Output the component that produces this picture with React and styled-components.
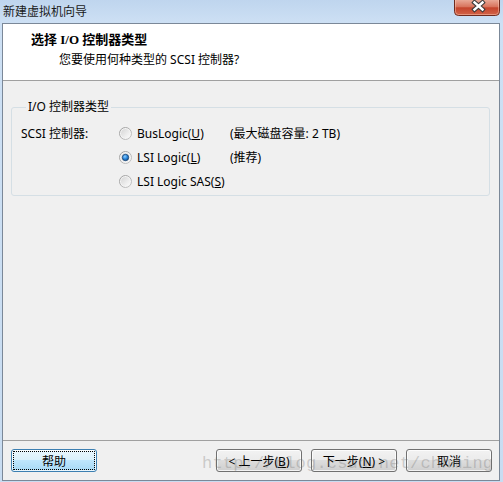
import React from "react";
import styled, { createGlobalStyle } from "styled-components";

const GlobalStyle = createGlobalStyle`
  html, body {
    margin: 0;
    padding: 0;
  }
  body {
    width: 503px;
    height: 482px;
    overflow: hidden;
    background: #c9ddf2;
    font-family: "Noto Sans", "Noto Sans CJK SC", sans-serif;
    font-size: 12px;
    color: #000;
  }
`;

const Window = styled.div`
  position: relative;
  width: 503px;
  height: 482px;
  display: flex;
  flex-direction: column;
  background: linear-gradient(to bottom, #bfd5ee 0px, #cde0f4 23px, #c8dcf1 100%);
  overflow: hidden;
`;

const TitleBar = styled.div`
  height: 23px;
  flex-shrink: 0;
  display: flex;
  align-items: flex-start;
  justify-content: space-between;
  padding: 0 3px;
`;

const Caption = styled.span`
  line-height: 23px;
  font-size: 12px;
  color: #1a1a1a;
`;

const Client = styled.div`
  flex: 1;
  margin: 0 3px 1px 2px;
  border: 1px solid #7b8898;
  background: #f0f0f0;
  display: flex;
  flex-direction: column;
`;

const Header = styled.div`
  height: 57px;
  box-sizing: border-box;
  flex-shrink: 0;
  background: #fff;
  border-bottom: 1px solid #a0a0a0;
  padding: 8px 0 0 28px;
`;

const HeaderTitle = styled.div`
  font-family: "Liberation Serif", "Noto Sans CJK SC", serif;
  font-weight: bold;
  font-size: 13px;
  line-height: 16px;
`;

const HeaderSub = styled.div`
  margin: 4px 0 0 28px;
  line-height: 16px;
`;

const Body = styled.div`
  flex: 1;
  padding: 18px 9px 0 8px;
`;

const Group = styled.fieldset`
  margin: 0;
  padding: 6px 0 2px 9px;
  border: 1px solid #d5dfe5;
  border-radius: 3px;
  min-width: 0;
`;

const Legend = styled.legend`
  margin-left: 5px;
  padding: 0 2px;
  line-height: 16px;
  font-size: 12px;
`;

const OptionGrid = styled.div`
  display: grid;
  grid-template-columns: 98px 111px 1fr;
  grid-auto-rows: 24px;
  align-items: center;
`;

const FieldLabel = styled.span`
  grid-column: 1;
`;

const RadioItem = styled.label`
  grid-column: 2;
  display: flex;
  align-items: center;
  gap: 5px;
  white-space: nowrap;
`;

const Note = styled.span`
  grid-column: 3;
  white-space: nowrap;
`;

const Key = styled.span`
  text-decoration: underline;
`;

const Footer = styled.div`
  flex-shrink: 0;
  height: 40px;
  box-sizing: border-box;
  border-top: 1px solid #a0a0a0;
  display: flex;
  justify-content: space-between;
  align-items: flex-start;
  padding: 8px 7px 0 8px;
`;

const ButtonGroup = styled.div`
  display: flex;
  gap: 9px;
`;

const Button = styled.button`
  width: 86px;
  height: 23px;
  padding: 0;
  border: 1px solid ${(p) => (p.$primary ? "#3c7fb1" : "#707070")};
  border-radius: 3px;
  font-family: "Noto Sans", "Noto Sans CJK SC", sans-serif;
  font-size: 12px;
  color: #000;
  box-shadow: inset 0 0 0 1px rgba(255, 255, 255, 0.75);
  background: ${(p) =>
    p.$primary
      ? "linear-gradient(to bottom, #eaf6fd 0%, #d9f0fc 50%, #bee6fd 50%, #a7d9f5 100%)"
      : "linear-gradient(to bottom, #f2f2f2 0%, #ebebeb 50%, #dddddd 50%, #cfcfcf 100%)"};
  outline: ${(p) => (p.$primary ? "1px dotted #000" : "none")};
  outline-offset: -3px;
  cursor: default;
`;

const Watermark = styled.div`
  position: absolute;
  left: 202px;
  top: 455px;
  font-family: "Liberation Mono", monospace;
  font-size: 17px;
  letter-spacing: 0.2px;
  line-height: 1;
  color: rgba(110, 110, 110, 0.3);
  white-space: nowrap;
  pointer-events: none;
`;

const CloseButton = () => (
  <svg width="46" height="16" viewBox="0 0 46 16">
    <defs>
      <linearGradient id="closeBg" x1="0" y1="0" x2="0" y2="1">
        <stop offset="0" stopColor="#e9a896" />
        <stop offset="0.45" stopColor="#d7725b" />
        <stop offset="0.5" stopColor="#c4442c" />
        <stop offset="1" stopColor="#d3654a" />
      </linearGradient>
    </defs>
    <path
      d="M0.5 0 V11.5 A4 4 0 0 0 4.5 15.5 H41.5 A4 4 0 0 0 45.5 11.5 V0"
      fill="url(#closeBg)"
      stroke="#6e2a1e"
    />
    <path
      d="M1.5 0 V11.3 A3 3 0 0 0 4.5 14.5 H41.5 A3 3 0 0 0 44.5 11.3 V0"
      fill="none"
      stroke="rgba(255,210,190,0.45)"
    />
    <g strokeLinecap="square">
      <path d="M20.5 2.5 L28.5 9.5 M28.5 2.5 L20.5 9.5" stroke="#3b3b3b" strokeWidth="4.5" />
      <path d="M20.5 2.5 L28.5 9.5 M28.5 2.5 L20.5 9.5" stroke="#fff" strokeWidth="2.4" />
    </g>
  </svg>
);

const Radio = ({ checked }) => (
  <svg width="13" height="13" viewBox="0 0 13 13">
    <defs>
      <linearGradient id="radioRing" x1="0" y1="0" x2="1" y2="1">
        <stop offset="0" stopColor="#9a9a9a" />
        <stop offset="1" stopColor="#c8c8c8" />
      </linearGradient>
      <linearGradient id="radioFill" x1="0" y1="0" x2="1" y2="1">
        <stop offset="0" stopColor="#d6d6d6" />
        <stop offset="1" stopColor="#fbfbfb" />
      </linearGradient>
      <radialGradient id="radioDot" cx="0.4" cy="0.35" r="0.7">
        <stop offset="0" stopColor="#8fd0ff" />
        <stop offset="0.5" stopColor="#2d8ae0" />
        <stop offset="1" stopColor="#0f4c8c" />
      </radialGradient>
    </defs>
    <circle cx="6.5" cy="6.5" r="6" fill="#f4f4f4" stroke="url(#radioRing)" />
    <circle cx="6.5" cy="6.5" r="4.5" fill="url(#radioFill)" />
    {checked && (
      <circle cx="6.5" cy="6.5" r="3.2" fill="url(#radioDot)" stroke="#1b4471" strokeWidth="0.8" />
    )}
  </svg>
);

const options = [
  { text: "BusLogic", key: "U", note: "(最大磁盘容量: 2 TB)" },
  { text: "LSI Logic", key: "L", note: "(推荐)", checked: true },
  { text: "LSI Logic SAS", key: "S" },
];

export default function App() {
  return (
    <Window>
      <GlobalStyle />
      <TitleBar>
        <Caption>新建虚拟机向导</Caption>
        <CloseButton />
      </TitleBar>
      <Client>
        <Header>
          <HeaderTitle>选择 I/O 控制器类型</HeaderTitle>
          <HeaderSub>您要使用何种类型的 SCSI 控制器?</HeaderSub>
        </Header>
        <Body>
          <Group>
            <Legend>I/O 控制器类型</Legend>
            <OptionGrid>
              <FieldLabel>SCSI 控制器:</FieldLabel>
              {options.map((o, i) => (
                <React.Fragment key={o.text}>
                  <RadioItem style={{ gridRow: i + 1 }}>
                    <Radio checked={o.checked} />
                    <span>
                      {o.text}(<Key>{o.key}</Key>)
                    </span>
                  </RadioItem>
                  {o.note && <Note style={{ gridRow: i + 1 }}>{o.note}</Note>}
                </React.Fragment>
              ))}
            </OptionGrid>
          </Group>
        </Body>
        <Footer>
          <Button $primary>帮助</Button>
          <ButtonGroup>
            <Button>
              &lt; 上一步(<Key>B</Key>)
            </Button>
            <Button>
              下一步(<Key>N</Key>) &gt;
            </Button>
            <Button>取消</Button>
          </ButtonGroup>
        </Footer>
      </Client>
      <Watermark>http://blog.csdn.net/chnming</Watermark>
    </Window>
  );
}
